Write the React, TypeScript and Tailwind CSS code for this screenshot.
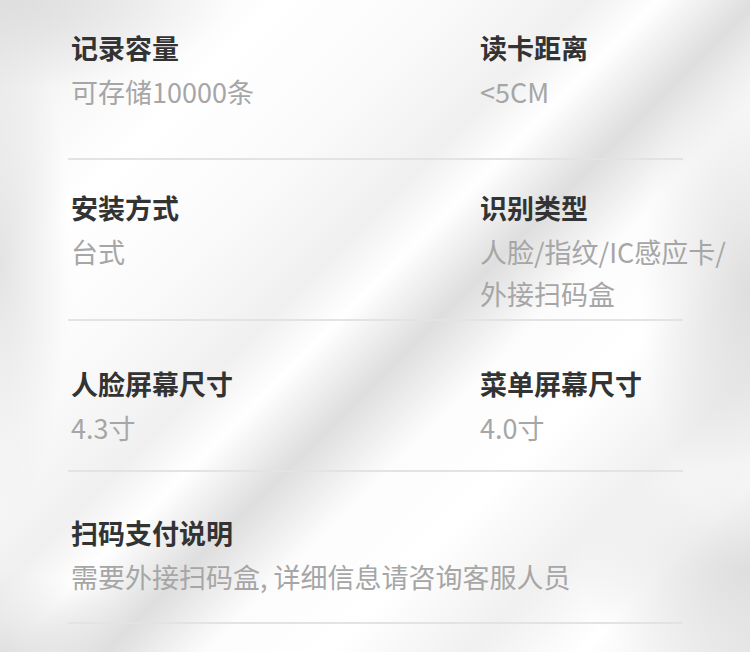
import React from 'react';

interface SpecItem {
  label: string;
  value: string[];
  wide?: boolean;
}

interface SpecRow {
  items: SpecItem[];
  rowClass: string;
}

const rows: SpecRow[] = [
  {
    rowClass: 'h-[160px] pt-[28px]',
    items: [
      { label: '记录容量', value: ['可存储10000条'] },
      { label: '读卡距离', value: ['<5CM'] },
    ],
  },
  {
    rowClass: 'h-[161px] pt-[28px]',
    items: [
      { label: '安装方式', value: ['台式'] },
      { label: '识别类型', value: ['人脸/指纹/IC感应卡/', '外接扫码盒'] },
    ],
  },
  {
    rowClass: 'h-[151px] pt-[43px]',
    items: [
      { label: '人脸屏幕尺寸', value: ['4.3寸'] },
      { label: '菜单屏幕尺寸', value: ['4.0寸'] },
    ],
  },
  {
    rowClass: 'h-[152px] pt-[41px]',
    items: [{ label: '扫码支付说明', value: ['需要外接扫码盒, 详细信息请咨询客服人员'], wide: true }],
  },
];

const Spec: React.FC<{ item: SpecItem }> = ({ item }) => (
  <div className={item.wide ? 'col-span-2 flex flex-col' : 'flex flex-col'}>
    <div className="text-[27px] leading-[40px] font-bold text-[#333333]">{item.label}</div>
    <div className="mt-[3px] text-[27px] leading-[42px] text-[#a6a6a6] whitespace-nowrap">
      {item.value.map((line) => (
        <div key={line}>{line}</div>
      ))}
    </div>
  </div>
);

export default function App() {
  return (
    <div
      className="w-[750px] h-[652px] overflow-hidden bg-white bg-[radial-gradient(ellipse_70px_260px_at_0%_40%,#e3e3e3,transparent),radial-gradient(ellipse_110px_230px_at_100%_45%,#dedede,transparent),radial-gradient(ellipse_170px_110px_at_100%_88%,#dedede,transparent),radial-gradient(ellipse_230px_90px_at_0%_0%,#dedede,transparent),radial-gradient(ellipse_150px_80px_at_0%_100%,#e0e0e0,transparent),linear-gradient(135deg,#e8e8e8_0%,#f8f8f8_12%,#ffffff_20%,#fafafa_32%,#f0f0f0_42%,#ffffff_47%,#dedede_54%,#fcfcfc_61%,#ffffff_70%,#f0f0f0_80%,#ffffff_88%,#e8e8e8_100%)]"
      style={{ fontFamily: '"Noto Sans CJK SC", "Noto Sans", sans-serif' }}
    >
      <div className="ml-[68px] w-[615px]">
        {rows.map((row, i) => (
          <div key={i} className={`${row.rowClass} border-b-2 border-[#e3e3e3] box-border`}>
            <div className="grid grid-cols-[409px_1fr] pl-[3px]">
              {row.items.map((item) => (
                <Spec key={item.label} item={item} />
              ))}
            </div>
          </div>
        ))}
      </div>
    </div>
  );
}
